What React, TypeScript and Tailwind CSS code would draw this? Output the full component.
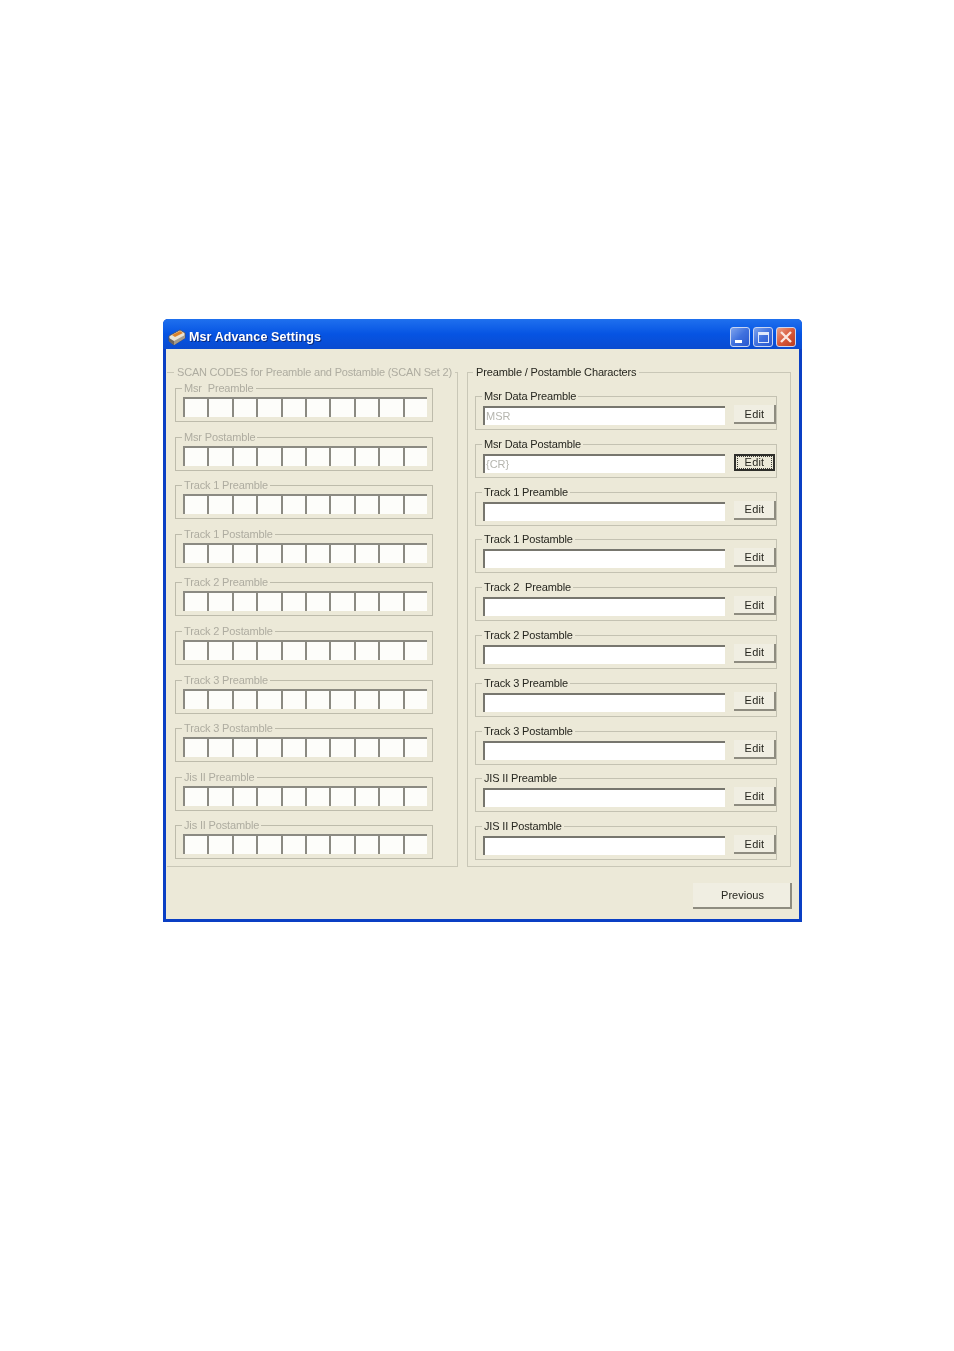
import React from 'react';

const leftGroups = [
  'Msr  Preamble',
  'Msr Postamble',
  'Track 1 Preamble',
  'Track 1 Postamble',
  'Track 2 Preamble',
  'Track 2 Postamble',
  'Track 3 Preamble',
  'Track 3 Postamble',
  'Jis II Preamble',
  'Jis II Postamble',
];

const rightGroups = [
  { label: 'Msr Data Preamble', value: 'MSR' },
  { label: 'Msr Data Postamble', value: '{CR}', focused: true },
  { label: 'Track 1 Preamble' },
  { label: 'Track 1 Postamble' },
  { label: 'Track 2  Preamble' },
  { label: 'Track 2 Postamble' },
  { label: 'Track 3 Preamble' },
  { label: 'Track 3 Postamble' },
  { label: 'JIS II Preamble' },
  { label: 'JIS II Postamble' },
];

const cells = [0, 1, 2, 3, 4, 5, 6, 7, 8, 9];

const Legend = ({ text, disabled }: { text: string; disabled?: boolean }) => (
  <span
    className={`absolute left-[6px] top-[-8px] h-[15px] whitespace-pre bg-[#ece9d8] px-[2px] text-[11px] leading-[15px] tracking-[-0.15px] ${
      disabled ? 'text-[#aeaca0]' : 'text-[#26261f]'
    }`}
  >
    {text}
  </span>
);

const ScanGroup = ({ label }: { label: string }) => (
  <div className="relative h-[34px] w-[258px] border border-[#bdbbab] pl-[7px] pt-[8px]">
    <Legend text={label} disabled />
    <div className="flex">
      {cells.map((c) => (
        <div
          key={c}
          className="h-[20px] w-[24.4px] border-l-2 border-t-2 border-[#8b8a82] bg-[#fdfdfa]"
        />
      ))}
    </div>
  </div>
);

const CharGroup = ({ label, value, focused }: { label: string; value?: string; focused?: boolean }) => (
  <div className="relative flex h-[34px] w-[302px] border border-[#c4c2b2] pl-[7px]">
    <Legend text={label} />
    <div className="mt-[9px] h-[19px] w-[242px] border-l-2 border-t-2 border-[#77766e] bg-white pl-[1px] text-[11px] leading-[17px] text-[#b5b5ae]">
      {value}
    </div>
    {focused ? (
      <button className="ml-[9px] mt-[9px] flex h-[17px] w-[41px] items-center justify-center border-2 border-[#2f2f2b] bg-[#ece9d8] text-[11px] leading-none tracking-[0.2px] text-[#26261f]">
        <span className="border border-dotted border-[#3a3a34] px-[7px] leading-[11px]">Edit</span>
      </button>
    ) : (
      <button className="ml-[9px] mt-[8px] h-[19px] w-[42px] border-b-2 border-r-2 border-[#8e8c80] bg-[#f0eee2] pl-[1px] pt-[1px] text-[11px] leading-none tracking-[0.2px] text-[#26261f]">
        Edit
      </button>
    )}
  </div>
);

const TitleIcon = () => (
  <svg width="18" height="17" viewBox="0 0 18 17" className="shrink-0">
    <path d="M1 7 L12 1 L17 4 L17 9 L6 16 L1 12 Z" fill="#e9e4d6" stroke="#5b5147" strokeWidth="0.8" />
    <path d="M4 6 L12 2 L15 4 L7 8 Z" fill="#d9822b" />
    <path d="M1 9 L6 12 L6 16 L1 12 Z" fill="#6d655c" />
    <path d="M6 12 L17 6 L17 9 L6 16 Z" fill="#a59c8c" />
  </svg>
);

const CaptionButton = ({ kind }: { kind: 'min' | 'max' | 'close' }) => (
  <div
    className={`flex h-[20px] w-[20px] items-center justify-center rounded-[3px] border border-[#c9d6f2] ${
      kind === 'close'
        ? 'bg-gradient-to-br from-[#e8a088] via-[#d9593a] to-[#b83c1e]'
        : 'bg-gradient-to-br from-[#7fa3ec] via-[#3f70de] to-[#2a58cf]'
    }`}
  >
    {kind === 'min' && <div className="mr-[4px] mt-[9px] h-[3px] w-[7px] bg-white" />}
    {kind === 'max' && <div className="h-[11px] w-[11px] border border-t-[3px] border-[#dfe8fb]" />}
    {kind === 'close' && (
      <svg width="14" height="14" viewBox="0 0 14 14">
        <path d="M2 2 L12 12 M12 2 L2 12" stroke="#fbe6de" strokeWidth="2.4" />
      </svg>
    )}
  </div>
);

export default function App() {
  return (
    <div className="h-[1351px] w-[954px] overflow-hidden bg-white pl-[163px] pt-[319px] font-['Liberation_Sans',Arial,sans-serif]">
      <div className="h-[603px] w-[639px] overflow-hidden rounded-t-[5px] bg-[#0a3fc4] blur-[0.5px]">
        <div className="flex h-[30px] items-center bg-gradient-to-b from-[#1f70ee] via-[#0654e3] to-[#0a4bd0] pl-[5px] pr-[6px] pt-[6px]">
          <TitleIcon />
          <span className="ml-[3px] text-[12.5px] font-bold tracking-[0.1px] text-white [text-shadow:1px_1px_0_#0a2a80]">
            Msr Advance Settings
          </span>
          <div className="ml-auto flex gap-[3px]">
            <CaptionButton kind="min" />
            <CaptionButton kind="max" />
            <CaptionButton kind="close" />
          </div>
        </div>

        <div className="mx-[3px] h-[570px] bg-[#ece9d8] pl-[1px] pt-[23px]">
          <div className="flex gap-[9px]">
            <div className="relative flex h-[495px] w-[291px] flex-col gap-[14.6px] border-b border-r border-t border-[#c9c7b7] pl-[8px] pt-[15px]">
              <span className="absolute left-[7px] top-[-8px] h-[15px] whitespace-pre bg-[#ece9d8] px-[3px] text-[11px] leading-[15px] tracking-[-0.2px] text-[#aeaca0]">
                SCAN CODES for Preamble and Postamble (SCAN Set 2)
              </span>
              {leftGroups.map((g) => (
                <ScanGroup key={g} label={g} />
              ))}
            </div>

            <div className="relative flex h-[495px] w-[324px] flex-col gap-[13.8px] border border-[#c9c7b7] pl-[7px] pt-[23px]">
              <span className="absolute left-[5px] top-[-8px] h-[15px] whitespace-pre bg-[#ece9d8] px-[3px] text-[11px] leading-[15px] tracking-[-0.15px] text-[#26261f]">
                Preamble / Postamble Characters
              </span>
              {rightGroups.map((g) => (
                <CharGroup key={g.label} label={g.label} value={g.value} focused={g.focused} />
              ))}
            </div>
          </div>

          <div className="mt-[16px] flex justify-end pr-[7px]">
            <button className="h-[26px] w-[99px] border-b-2 border-r-2 border-[#8e8c80] bg-[#f0eee2] pl-[2px] text-[11px] text-[#26261f]">
              Previous
            </button>
          </div>
        </div>
      </div>
    </div>
  );
}
